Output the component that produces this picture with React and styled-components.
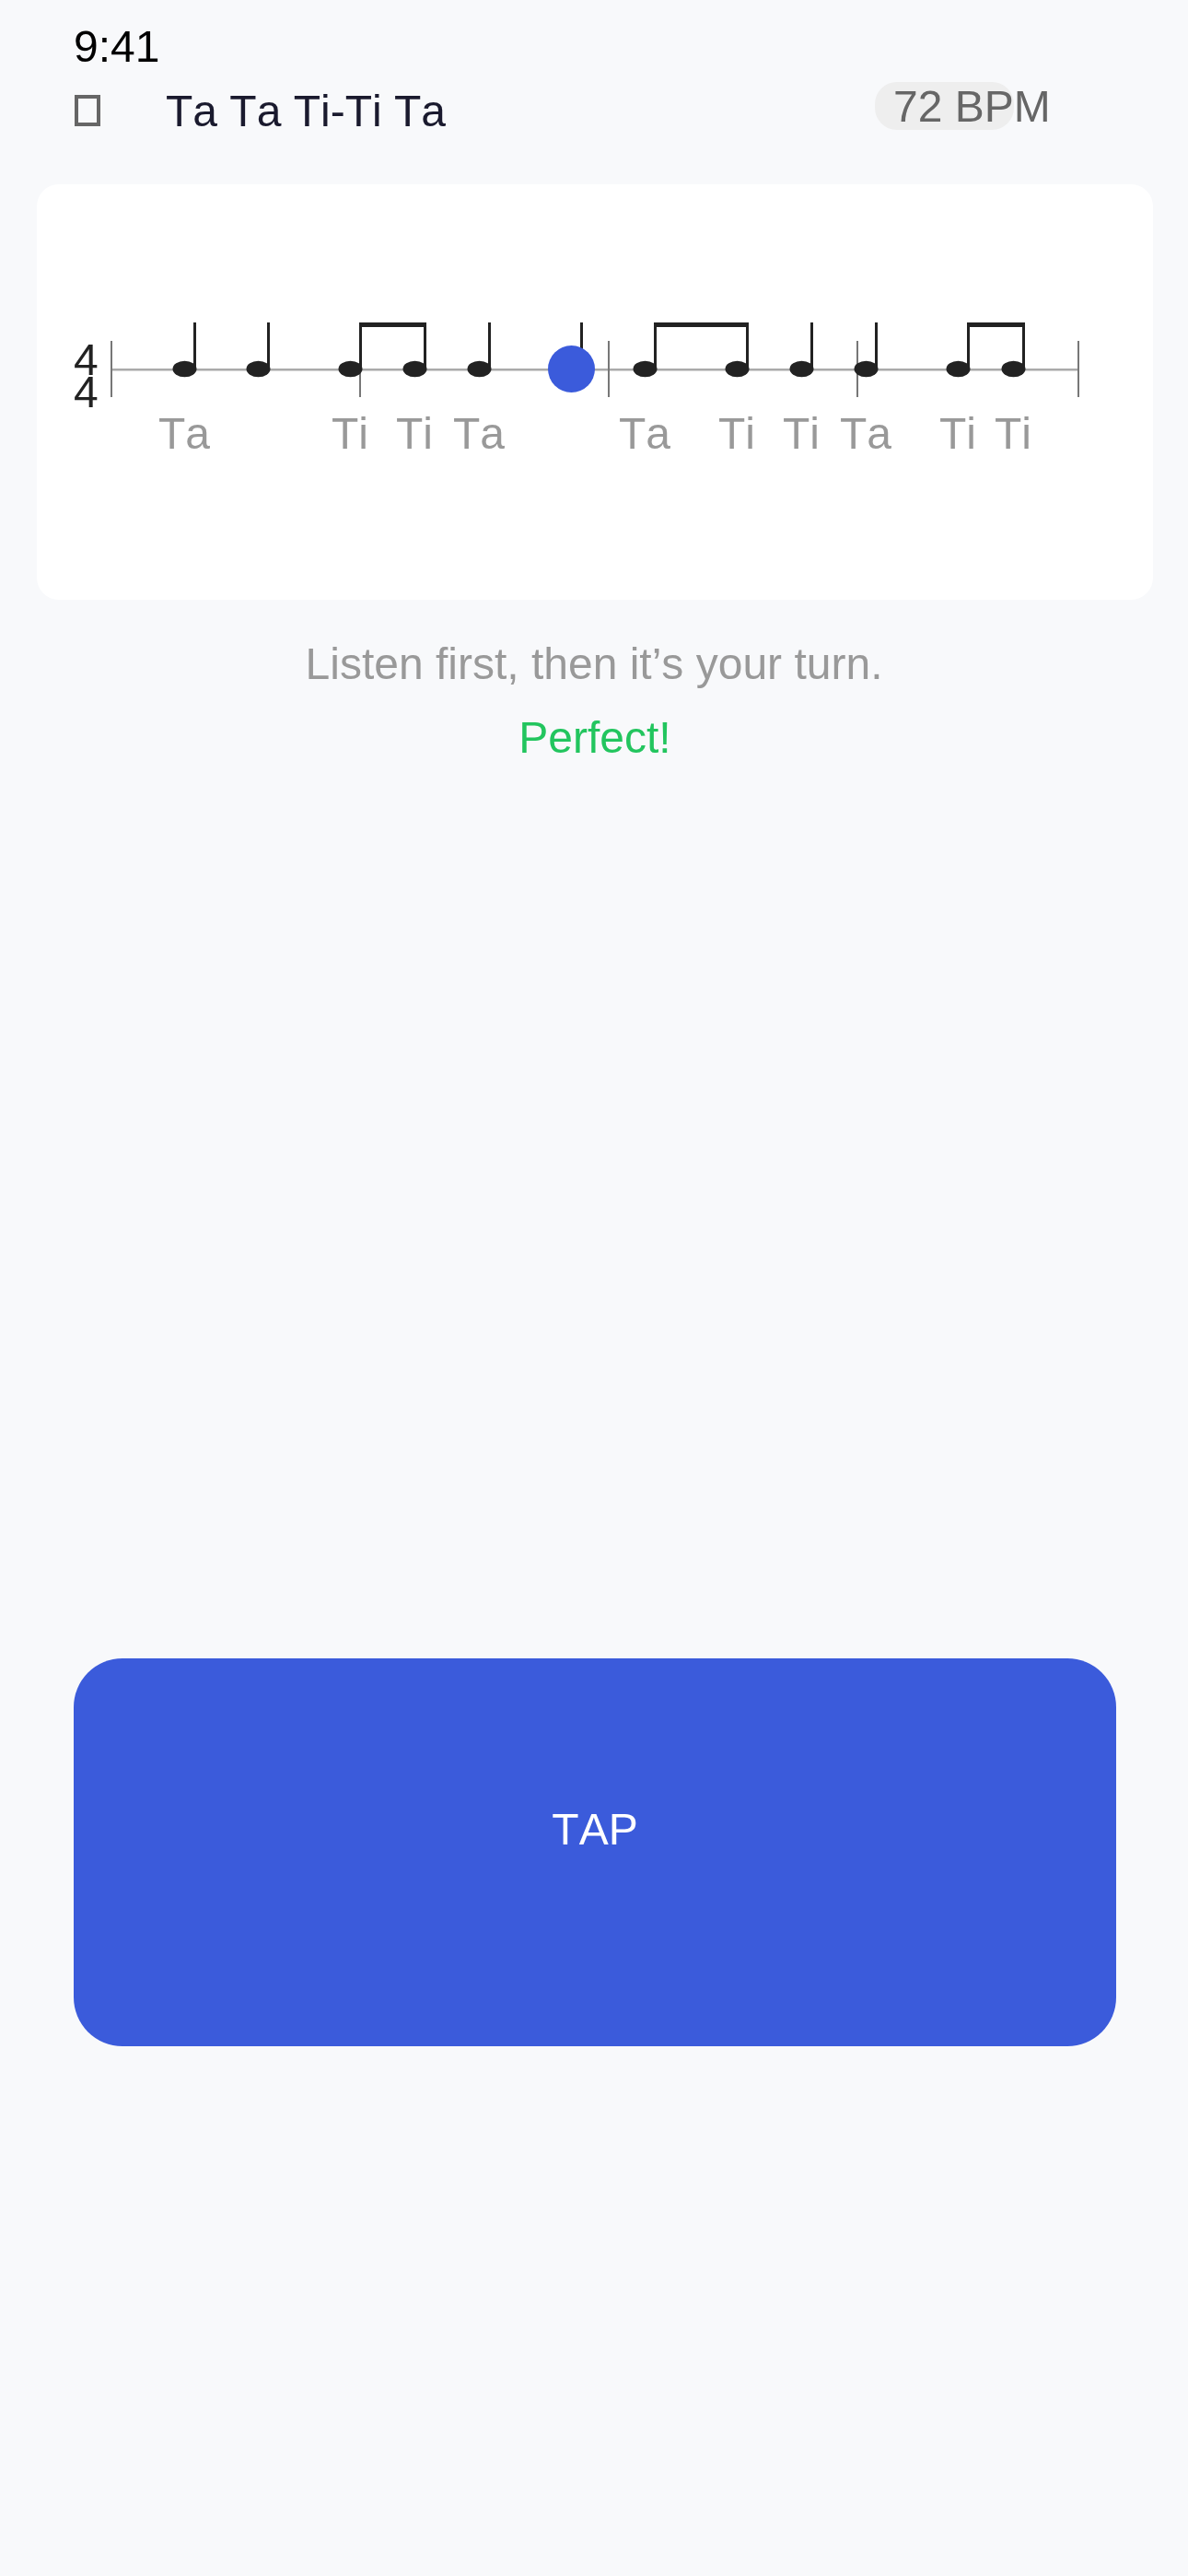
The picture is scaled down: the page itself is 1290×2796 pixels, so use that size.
import React from "react";
import styled, { createGlobalStyle, css } from "styled-components";

const Global = createGlobalStyle`
  html, body { margin: 0; padding: 0; background: #f8f9fb; }
  body { font-family: "Liberation Sans", Arial, sans-serif; font-kerning: none; }
`;

const grayText = css`
  will-change: transform;
`;

const Screen = styled.div`
  width: 1290px;
  height: 2796px;
  overflow: hidden;
  box-sizing: border-box;
  display: flex;
  flex-direction: column;
  background: #f8f9fb;
  font-size: 48px;
  line-height: 55px;
  font-kerning: none;
`;

const StatusBar = styled.div`
  ${grayText}
  padding: 23px 80px 0;
  color: #000;
  height: 55px;
`;

const Header = styled.header`
  display: flex;
  align-items: flex-start;
  margin-top: 11px;
  padding: 0 80px;
  height: 111px;
`;

const BackGlyph = styled.span`
  box-sizing: border-box;
  width: 28px;
  height: 34px;
  margin: 14px 0 0 1px;
  border: 4px solid #666;
  flex: none;
`;

const Title = styled.h1`
  ${grayText}
  margin: 4px 0 0 71px;
  font: inherit;
  font-kerning: none;
  color: #1a1a2e;
`;

const Tempo = styled.div`
  ${grayText}
  box-sizing: border-box;
  width: 151px;
  height: 52px;
  margin-left: auto;
  margin-right: 109px;
  padding-left: 20px;
  line-height: 53px;
  border-radius: 24px;
  background: #eeeeee;
  color: #666;
  white-space: nowrap;
`;

const Card = styled.section`
  margin: 0 38px 0 40px;
  height: 451px;
  border-radius: 24px;
  background: #fff;
`;

const Staff = styled.svg`
  ${grayText}
  display: block;
  width: 1212px;
  height: 451px;
  font-kerning: none;
`;

const Hint = styled.p`
  ${grayText}
  margin: 42px 0 0;
  text-align: center;
  color: #999;
`;

const Result = styled.p`
  ${grayText}
  margin: 25px 0 0;
  padding-left: 2px;
  text-align: center;
  color: #22c55e;
`;

const TapButton = styled.button`
  box-sizing: border-box;
  margin: 972px 78px 0 80px;
  width: 1132px;
  height: 421px;
  padding: 158px 0 0;
  border: 0;
  border-radius: 53px;
  background: #3b5bdb;
  color: #fff;
  font: inherit;
  font-kerning: none;
  display: flex;
  justify-content: center;
  align-items: flex-start;
  ${grayText}
`;

const NOTES = [200, 280, 380, 450, 520, 620, 700, 800, 870, 940, 1040, 1100];
const BEAMS = [[380, 450], [700, 800], [1040, 1100]];
const BARS = [121, 391, 661, 931, 1171];
const LABELS = [
  [200, "Ta"], [380, "Ti"], [450, "Ti"], [520, "Ta"], [700, "Ta"],
  [800, "Ti"], [870, "Ti"], [940, "Ta"], [1040, "Ti"], [1100, "Ti"],
];

export default function App() {
  return (
    <Screen>
      <Global />
      <StatusBar>9:41</StatusBar>
      <Header>
        <BackGlyph />
        <Title>Ta Ta Ti-Ti Ta</Title>
        <Tempo>72 BPM</Tempo>
      </Header>
      <Card>
        <Staff viewBox="40 200 1212 451" fontFamily="'Liberation Sans', Arial, sans-serif" fontSize="48">
          <rect x="120" y="400" width="1052" height="2.5" fill="#aaa" />
          {BARS.map((x) => (
            <rect key={x} x={x - 1} y="370" width="2" height="61" fill="#777" />
          ))}
          <text x="80" y="407" fill="#222">4</text>
          <text x="80" y="442" fill="#222">4</text>
          {NOTES.map((x) => (
            <g key={x} fill="#222">
              <ellipse cx={x + 0.5} cy="400.5" rx="13" ry="8.7" />
              <rect x={x + 10} y="350" width="3" height="50" />
            </g>
          ))}
          {BEAMS.map(([a, b]) => (
            <rect key={a} x={a + 10} y="350" width={b - a + 3} height="5" fill="#222" />
          ))}
          <circle cx="620.5" cy="400.5" r="25.5" fill="#3b5bdb" />
          {LABELS.map(([x, t]) => (
            <text key={x} x={x} y="487" textAnchor="middle" fill="#999">{t}</text>
          ))}
        </Staff>
      </Card>
      <Hint>Listen first, then it’s your turn.</Hint>
      <Result>Perfect!</Result>
      <TapButton>TAP</TapButton>
    </Screen>
  );
}
